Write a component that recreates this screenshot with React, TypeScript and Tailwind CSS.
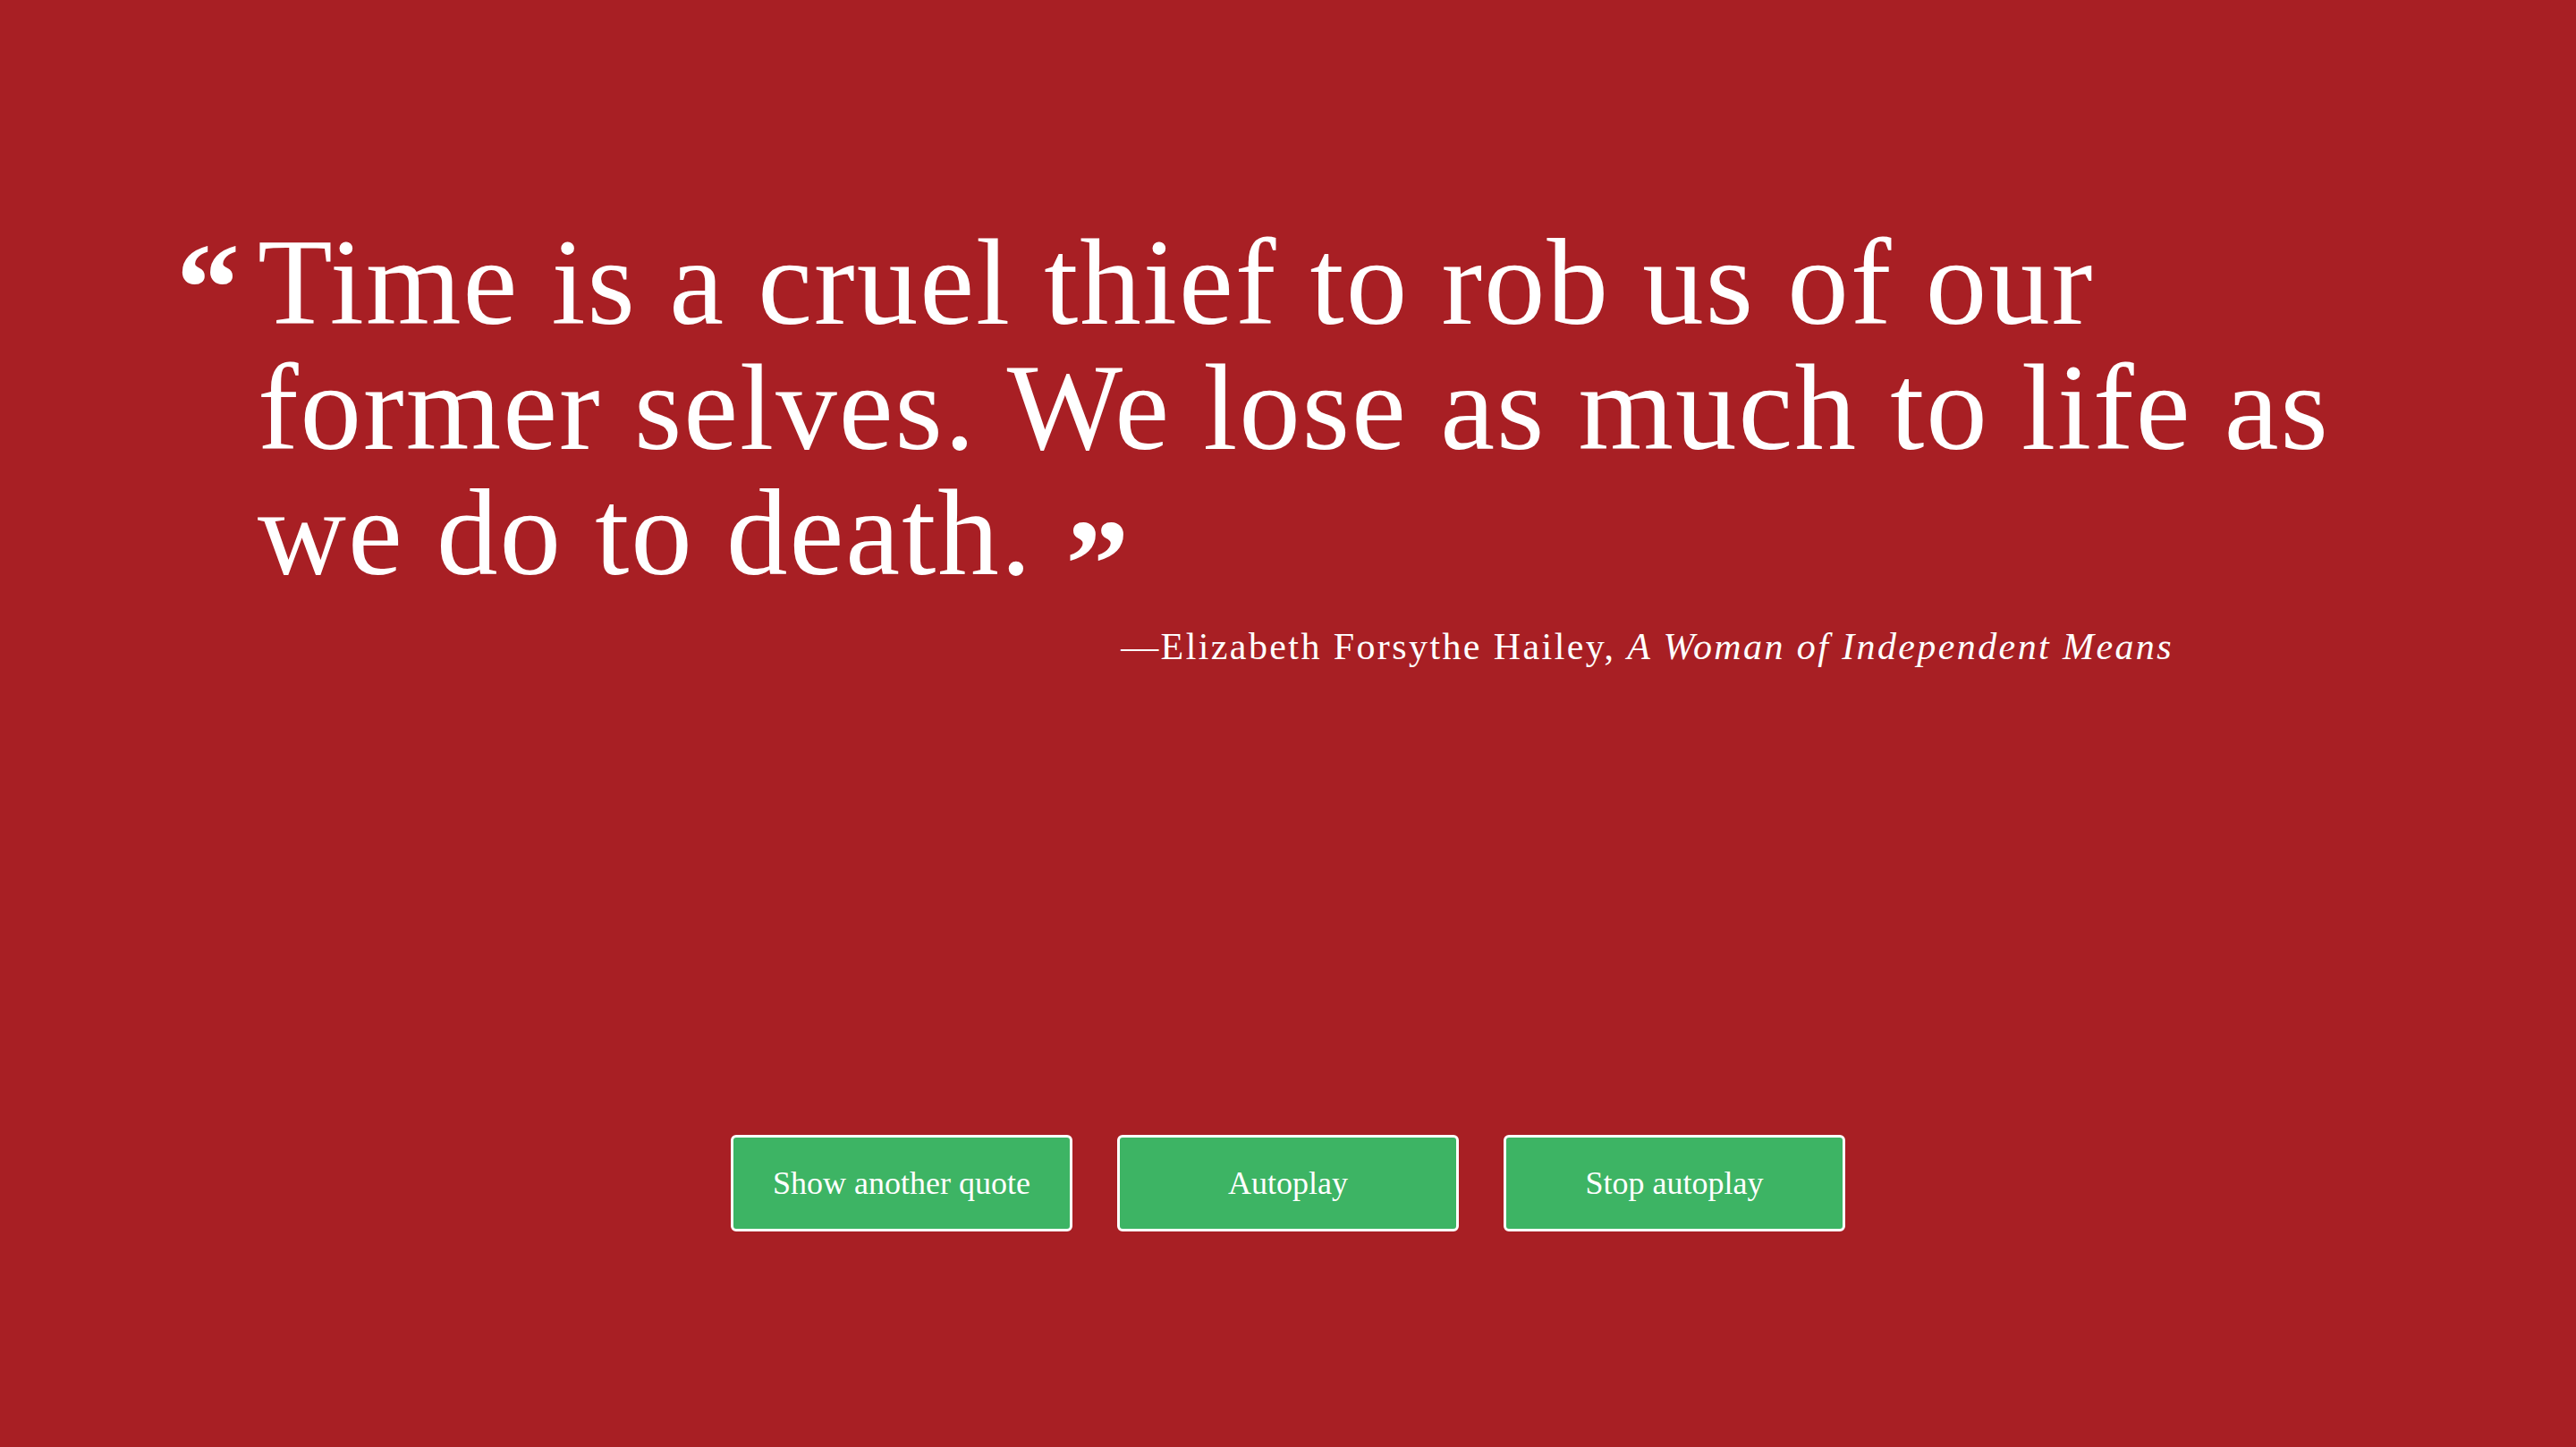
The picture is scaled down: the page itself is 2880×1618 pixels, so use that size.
import React from "react";

export default function App() {
  return (
    <div className="w-full h-[1618px] bg-[#a81f24] text-white overflow-hidden font-['Liberation_Serif',serif]">
      <div className="pt-[246px] pl-[197px] flex">
        <div className="w-[91px] shrink-0 text-[142px] leading-none font-bold h-[140px] mt-[5px]">“</div>
        <div className="w-[2340px]">
          <p className="text-[137px] leading-[140px] tracking-[2px]">
            Time is a cruel thief to rob us of our former selves. We lose as much to life as we do to death.{" "}
            <span className="relative top-[37px] text-[142px] font-bold leading-[0px]">”</span>
          </p>
        </div>
      </div>
      <div className="mt-[32px] pr-[450px] flex justify-end text-[42px] leading-[50px] tracking-[2.4px]">
        <span>—Elizabeth Forsythe Hailey, <em className="italic">A Woman of Independent Means</em></span>
      </div>
      <div className="mt-[521px] flex justify-center gap-[50px]">
        {["Show another quote", "Autoplay", "Stop autoplay"].map((t) => (
          <button key={t} className="w-[382px] h-[108px] bg-[#3db464] border-[3px] border-white rounded-[6px] text-white text-[36px]">
            {t}
          </button>
        ))}
      </div>
    </div>
  );
}
